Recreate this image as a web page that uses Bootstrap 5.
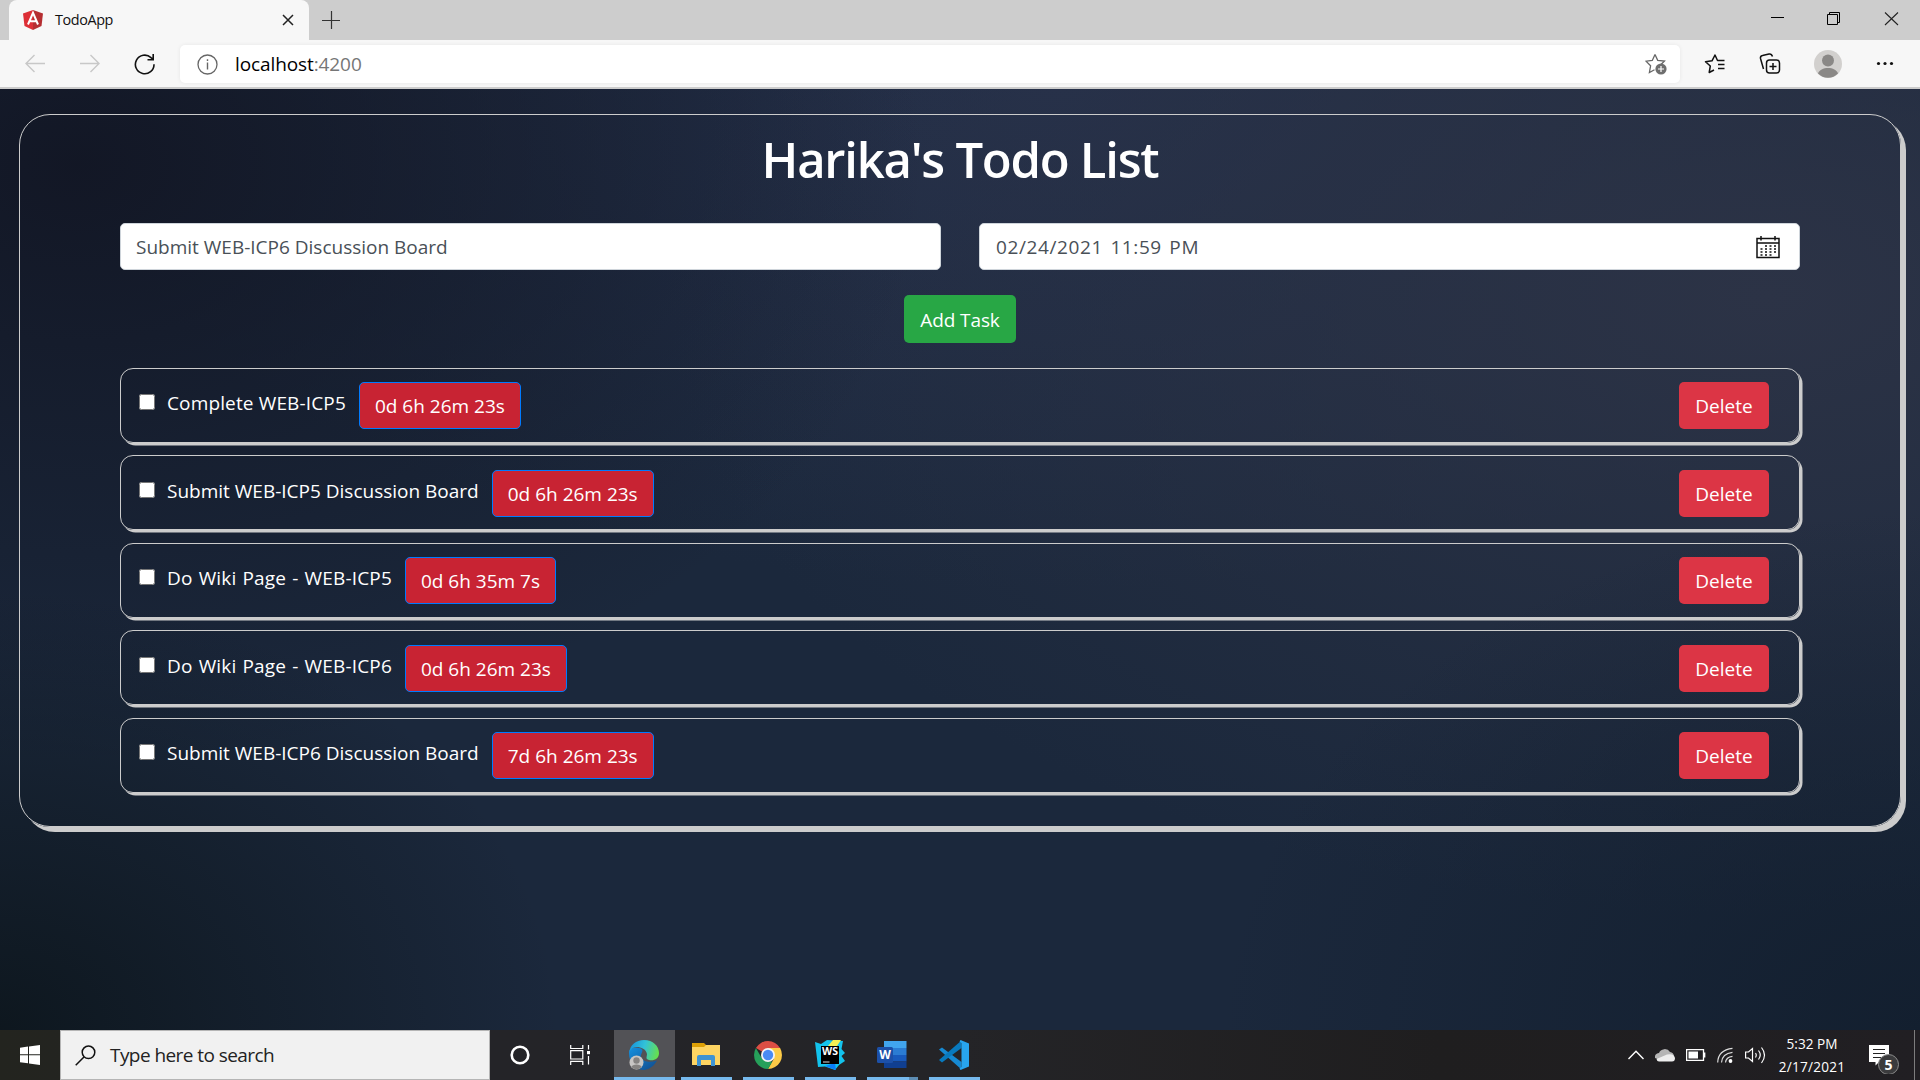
<!DOCTYPE html>
<html lang="en">
<head>
<meta charset="utf-8">
<meta name="viewport" content="width=device-width, initial-scale=1">
<title>TodoApp</title>
<link rel="stylesheet" href="https://cdn.jsdelivr.net/npm/bootstrap@5.3.0/dist/css/bootstrap.min.css">
<style>
  html, body { height: 1080px; overflow: hidden; }
  body { font-family: "Open Sans", "Noto Sans", sans-serif; font-size: 19px; line-height: 30px; color: #fff; }
  svg { display: block; flex: none; }
  /* browser chrome */
  .tab-strip { height: 40px; background: #cdcdcd; padding: 0 12px 0 9px; color: #000; }
  .tab-active { width: 300px; height: 40px; background: #f7f7f7; border-radius: 8px 8px 0 0; padding: 0 15px 0 14px; }
  .tab-title { font-size: 14.4px; letter-spacing: -.4px; line-height: 20px; color: #111; margin-left: 12px; }
  .new-tab { margin-left: 13px; }
  .window-controls { margin-bottom: 2px; }
  .address-row { height: 49px; background: #f7f7f7; border-bottom: 2px solid #ccc; padding: 5px 0 4px 24px; color: #000; }
  .address-box { width: 1500px; height: 38px; background: #fff; border-radius: 5px; margin-left: 22px; padding: 0 13px 0 17px; box-shadow: 0 0 4px rgba(0,0,0,.07); }
  .address-text { font-size: 19px; line-height: 28px; letter-spacing: -.1px; margin-left: 17px; }
  .address-text span { color: #767676; }
  /* page */
  .todo-page {
    height: 941px; padding: 25px 19px 0;
    background:
      radial-gradient(ellipse 560px 440px at 0% 100%, rgba(13,22,29,.95), rgba(13,22,29,0)),
      radial-gradient(ellipse 850px 600px at 4% 8%, rgba(18,22,36,.95), rgba(18,22,36,0)),
      radial-gradient(ellipse 700px 520px at 100% 100%, rgba(17,29,44,.8), rgba(17,29,44,0)),
      radial-gradient(ellipse 1100px 620px at 92% 22%, #2c3346, rgba(44,51,70,0)),
      radial-gradient(ellipse 1000px 500px at 55% 0%, #25304a, rgba(37,48,74,0)),
      #1b283c;
  }
  .todo-panel { width: 1882px; height: 713px; border: 1px solid #ccc; border-radius: 31px; box-shadow: 5px 5px 0 #ccc; padding: 14px 100px 0; }
  .todo-title { font-size: 49px; line-height: 60px; font-weight: 600; letter-spacing: -1.25px; margin: 0 0 34px; }
  .todo-fields { --bs-gutter-x: 38px; }
  .todo-field { height: 47px; border: 1px solid #ced4da; border-radius: 5px; background: #fff; color: #495057; padding: 1px 15px 0; line-height: 45px; }
  .todo-date { letter-spacing: .6px; word-spacing: 2px; margin-left: 1px; }
  .todo-btn { height: 47px; border-radius: 5px; padding: 2px 15px 0; font-size: 19px; line-height: 43px; color: #fff; border: 1px solid transparent; white-space: nowrap; }
  .add-btn { width: 112px; height: 48px; background: #28a745; margin: 25px auto; letter-spacing: -.1px; }
  .todo-list { gap: 12.4px; }
  .todo-item { height: 75px; border: 1px solid #ccc; border-radius: 13px; box-shadow: 2.5px 2.5px 0 #ccc; padding: 0 30px 0 18px; }
  .todo-item:nth-child(even) { padding-top: 1.4px; }
  .todo-check { width: 16px; height: 16px; margin: -7px 12px 0 0; }
  .todo-name { margin: -5px 13px 0 0; }
  .name-short { letter-spacing: .14px; }
  .name-wiki { letter-spacing: .16px; word-spacing: 1px; }
  .time-btn { background: #c82333; border-color: #007bff; }
  .delete-btn { width: 90px; background: #dc3545; }
  /* taskbar */
  .task-bar { height: 50px; background: linear-gradient(90deg, #23241f, #242428 25%, #242427 50%, #1f1e1f 75%, #211f23); }
  .start-btn { width: 60px; }
  .search-box { width: 430px; height: 50px; background: #f1f1f1; border: 1px solid #b5b5b5; color: #222; padding-left: 14px; }
  .search-text { letter-spacing: -.56px; margin-left: 14px; }
  .cortana-btn { margin-left: 20px; }
  .task-view { margin: 0 24px 0 40px; }
  .task-app { width: 51px; height: 50px; border-bottom: 3px solid #76b9ed; margin-right: 11px; padding: 3px 1px 0 0; }
  .task-app.current { width: 61px; background: #525256; margin-right: 6px; padding-right: 2px; }
  .task-app.grouped { border-image: linear-gradient(90deg, #76b9ed 78%, #5d8db3 78%) 3; }
  .tray-icons { gap: 11px; }
  .task-clock { width: 92px; font-size: 13.6px; line-height: 23px; }
  .clock-date { letter-spacing: .25px; }
  .notice-icon { margin-left: 11px; }
  .show-desktop { width: 6px; height: 50px; border-left: 1px solid #7d7d7d; margin-left: 14px; }
  .svg-label { font-family: "Open Sans", sans-serif; font-weight: 700; }
</style>
</head>
<body class="d-flex flex-column">
<header>
  <div class="tab-strip d-flex align-items-center">
    <div class="tab-active d-flex align-items-center">
      <svg width="20" height="20" viewBox="0 0 20 20"><path d="M10 0L0 3.400 1.500 16 10 20z" fill="#dd2f36"/><path d="M10 0L20 3.400 18.500 16 10 20z" fill="#b52e31"/><path d="M5 14.500L10 2.800 15 14.500M7 11.200H13" fill="none" stroke="#fff" stroke-width="2"/></svg>
      <span class="tab-title">TodoApp</span>
      <svg class="ms-auto" width="12" height="12" viewBox="0 0 12 12"><path d="M1 1L11 11M11 1L1 11" stroke="#222" stroke-width="1.500"/></svg>
    </div>
    <svg class="new-tab" width="18" height="18" viewBox="0 0 18 18"><path d="M9.500 0V18M0 9.500H18" stroke="#333" stroke-width="1.200"/></svg>
    <svg class="window-controls ms-auto" width="141" height="14" viewBox="0 0 141 14"><path d="M4 5.500H17" stroke="#000"/><path d="M60.500 2.500H70.500V12.500H60.500zM62.500 2.500V.5H72.500V10.500H70.500" fill="none" stroke="#000"/><path d="M118 .5L131 13M131 .5L118 13" stroke="#222" stroke-width="1.100"/></svg>
  </div>
  <div class="address-row d-flex align-items-center">
    <svg width="134" height="22" viewBox="0 0 134 22"><path d="M21 10.500H2M10.500 2L2 10.500 10.500 19M56 10.500H75M66.500 2L75 10.500 66.500 19" fill="none" stroke="#c8c8c8" stroke-width="1.400"/><path d="M130 11.200A9.300 9.300 0 1 1 127 4.600L129 6.300M129.200 1V6.800H123.500" fill="none" stroke="#111" stroke-width="1.600"/></svg>
    <div class="address-box d-flex align-items-center">
      <svg width="21" height="21" viewBox="0 0 21 21"><circle cx="10.500" cy="10.500" r="9.500" fill="none" stroke="#666" stroke-width="1.300"/><path d="M10.500 8.500V15.500M10.500 5.300V7" stroke="#666" stroke-width="1.400"/></svg>
      <span class="address-text">localhost<span>:4200</span></span>
      <svg class="ms-auto" width="22" height="22" viewBox="0 0 22 22"><path d="M10 1.500L12.700 7.300 19.500 8 16 11.500M10 1.500L7.300 7.500 1 8.200 5.600 12.800 4.400 19.500 9.500 16.800" fill="none" stroke="#666" stroke-width="1.300"/><circle cx="16" cy="16" r="5.600" fill="#6e6e6e"/><path d="M16 13V19M13 16H19" stroke="#fff" stroke-width="1.200"/></svg>
    </div>
    <svg width="215" height="30" viewBox="1680 0 215 30"><g fill="none" stroke="#111" stroke-width="1.500" stroke-linejoin="round"><path d="M1720 11.500H1717.500L1715 6 1712 11.800 1705.500 12.700 1710.300 17 1709.200 23.500 1714 21M1717.500 11.500H1724.500M1718 15.500H1724.500M1718 19.500H1724.500"/><rect x="1766.500" y="11" width="13" height="13" rx="3"/><path d="M1773 14V21M1769.500 17.500H1776.500M1763.500 20L1760.500 9.500Q1760 7 1762.500 6.500L1769 5Q1771.500 4.500 1772.500 7.500"/></g><circle cx="1828" cy="15" r="14" fill="#d2d0ce"/><circle cx="1828" cy="11.500" r="6" fill="#8a8886"/><path d="M1818 24.500C1820 17 1836 17 1838 24.500A14 14 0 0 1 1818 24.500" fill="#8a8886"/><g fill="#111"><circle cx="1878.500" cy="14.500" r="1.600"/><circle cx="1885" cy="14.500" r="1.600"/><circle cx="1891.500" cy="14.500" r="1.600"/></g></svg>
  </div>
</header>
<main class="todo-page">
  <section class="todo-panel">
    <h1 class="todo-title text-center">Harika's Todo List</h1>
    <div class="todo-fields row">
      <div class="col-6"><div class="todo-field">Submit WEB-ICP6 Discussion Board</div></div>
      <div class="col-6"><div class="todo-field d-flex align-items-center"><span class="todo-date">02/24/2021 11:59 PM</span>
        <svg class="ms-auto me-1" width="24" height="23" viewBox="0 0 24 23"><path d="M1 2.500H23V21.500H1zM1 7H23M5 0V4.500M19 0V4.500" fill="none" stroke="#111" stroke-width="1.500"/><path d="M9 10H20M4.500 13H20M4.500 16H20M4.500 19H16" stroke="#111" stroke-width="1.500" stroke-dasharray="2 2.500"/></svg></div></div>
    </div>
    <button class="btn todo-btn add-btn d-block">Add Task</button>
    <div class="todo-list d-flex flex-column">
      <div class="todo-item d-flex align-items-center"><input class="todo-check" type="checkbox"><span class="todo-name name-short">Complete WEB-ICP5</span><button class="btn todo-btn time-btn">0d 6h 26m 23s</button><button class="btn todo-btn delete-btn ms-auto">Delete</button></div>
      <div class="todo-item d-flex align-items-center"><input class="todo-check" type="checkbox"><span class="todo-name">Submit WEB-ICP5 Discussion Board</span><button class="btn todo-btn time-btn">0d 6h 26m 23s</button><button class="btn todo-btn delete-btn ms-auto">Delete</button></div>
      <div class="todo-item d-flex align-items-center"><input class="todo-check" type="checkbox"><span class="todo-name name-wiki">Do Wiki Page - WEB-ICP5</span><button class="btn todo-btn time-btn">0d 6h 35m 7s</button><button class="btn todo-btn delete-btn ms-auto">Delete</button></div>
      <div class="todo-item d-flex align-items-center"><input class="todo-check" type="checkbox"><span class="todo-name name-wiki">Do Wiki Page - WEB-ICP6</span><button class="btn todo-btn time-btn">0d 6h 26m 23s</button><button class="btn todo-btn delete-btn ms-auto">Delete</button></div>
      <div class="todo-item d-flex align-items-center"><input class="todo-check" type="checkbox"><span class="todo-name">Submit WEB-ICP6 Discussion Board</span><button class="btn todo-btn time-btn">7d 6h 26m 23s</button><button class="btn todo-btn delete-btn ms-auto">Delete</button></div>
    </div>
  </section>
</main>
<footer class="task-bar d-flex align-items-center">
  <div class="start-btn d-flex justify-content-center"><svg width="20" height="20" viewBox="0 0 20 20" fill="#fff"><path d="M0 2.700L8 1.600V9.300H0zM9 1.500L20 0V9.300H9zM0 10.300H8V18.200L0 17.200zM9 10.300H20V20L9 18.400z"/></svg></div>
  <div class="search-box d-flex align-items-center">
    <svg width="21" height="21" viewBox="0 0 21 21"><circle cx="13.500" cy="7.300" r="6.300" fill="none" stroke="#111" stroke-width="1.500"/><path d="M9 12L.7 20.300" stroke="#111" stroke-width="1.500"/></svg>
    <span class="search-text">Type here to search</span>
  </div>
  <svg class="cortana-btn" width="20" height="20" viewBox="0 0 20 20"><circle cx="10" cy="10" r="8.300" fill="none" stroke="#fff" stroke-width="2.600"/></svg>
  <svg class="task-view" width="20" height="20" viewBox="0 0 20 20"><path d="M.7 0V3.500H12.800V0M.7 5.700H12.800V14H.7zM.7 20V16.300H12.800V20M18.500 0V4.500M18.500 11V19.500" fill="none" stroke="#fff" stroke-width="1.200"/><path d="M17 6H20V9.200H17z" fill="#fff"/></svg>
  <div class="task-app current d-flex align-items-center justify-content-center">
    <svg width="30" height="30" viewBox="0 0 30 30">
      <defs>
        <linearGradient id="edgeTop" x1="0" y1=".3" x2="1" y2=".5"><stop offset="0" stop-color="#1693dc"/><stop offset=".5" stop-color="#32c2d8"/><stop offset="1" stop-color="#66e04e"/></linearGradient>
        <linearGradient id="edgeBase" x1="0" y1="0" x2="1" y2="1"><stop offset="0" stop-color="#1490df"/><stop offset="1" stop-color="#114a8b"/></linearGradient>
      </defs>
      <path d="M0 13C0 8 5 7 10 8 17 9 11 14 12 17 14 22 21 23 28 20.500 24 28 18 30 14 30 6 29 0 23 0 13z" fill="url(#edgeBase)"/>
      <path d="M0 13C1 5 7 0 15 0 24 0 30 6 30 13 30 19 25 21 20 20 16 19 18 17 18 14 17 9 12 7 8 7 4 7 1 10 0 13z" fill="url(#edgeTop)"/>
      <circle cx="7.500" cy="22.500" r="7" fill="#c8c6c4"/><circle cx="7.500" cy="20.500" r="3.200" fill="#858381"/><path d="M2.300 27C3 23.500 12 23.500 12.700 27A7 7 0 0 1 2.300 27" fill="#858381"/>
    </svg>
  </div>
  <div class="task-app d-flex align-items-center justify-content-center">
    <svg width="28" height="24" viewBox="0 0 28 24"><path d="M0 0H12L14 2V7H0z" fill="#dda006"/><path d="M0 4H12L14 2H28V22H0z" fill="#fdd462"/><path d="M5 14Q5 12 7 12H21Q23 12 23 14V23H19V17H9V23H5z" fill="#3e93d2"/></svg>
  </div>
  <div class="task-app d-flex align-items-center justify-content-center">
    <svg width="28" height="28" viewBox="0 0 28 28"><path d="M14 14L1.900 7A14 14 0 0 1 26.100 7z" fill="#dc4f44"/><path d="M14 7H26.100A14 14 0 0 1 14 28L20 17.500z" fill="#fdcb47"/><path d="M1.900 7L8 17.500 14 20.500H18.300L14 28A14 14 0 0 1 1.900 7z" fill="#26a05a"/><circle cx="14" cy="14" r="7" fill="#f4f4f4"/><circle cx="14" cy="14" r="5.200" fill="#4a8af4"/></svg>
  </div>
  <div class="task-app d-flex align-items-center justify-content-center">
    <svg width="30" height="30" viewBox="0 0 30 30"><path d="M0 2L6 4 12 0 28 1 26.500 9 30 13 26.500 16 30 21 24 25 20 30 10 26.500 3 27z" fill="#13c3ed"/><path d="M10 26L20 23 21 30z" fill="#087cfa"/><path d="M18 0H26L22 6H13z" fill="#f4f153"/><path d="M6 6H24V24H6z" fill="#000"/><text x="15" y="15" fill="#fff" font-size="10.500" text-anchor="middle" class="svg-label">WS</text><path d="M8 21.500H14.500V22.500H8z" fill="#ddd"/></svg>
  </div>
  <div class="task-app grouped d-flex align-items-center justify-content-center">
    <svg width="30" height="28" viewBox="0 0 30 28"><path d="M7 0H29.500V7H7z" fill="#41a5ee"/><path d="M7 7H29.500V14H7z" fill="#2b7cd3"/><path d="M7 14H29.500V20.500H7z" fill="#185abd"/><path d="M7 20.500H29.500V27H7z" fill="#103f91"/><rect x="0" y="6" width="16" height="16" rx="1.500" fill="#1c50a8"/><text x="8" y="18" fill="#fff" font-size="12" text-anchor="middle" class="svg-label">W</text></svg>
  </div>
  <div class="task-app d-flex align-items-center justify-content-center">
    <svg width="30" height="30" viewBox="0 0 30 30"><path d="M0 9.500L3 7.500 22.500 22V29.500z" fill="#1689d2"/><path d="M0 20L3 22.500 22.500 8V.5z" fill="#0879bd"/><path d="M21.500 0L30 3.500V26.500L21.500 30 20.500 28.500 22.500 27V3L20.500 1.500z" fill="#28a5ee"/></svg>
  </div>
  <div class="tray-icons d-flex align-items-center ms-auto">
    <svg width="16" height="10" viewBox="0 0 16 10"><path d="M.5 9L8 1.300 15.500 9" fill="none" stroke="#fff" stroke-width="1.400"/></svg>
    <svg width="20" height="14" viewBox="0 0 20 14"><path d="M0 10A4 4 0 0 1 4 5 6 5.500 0 0 1 15 4Q18.500 4.500 19 8L5 12z" fill="#b5b5b5"/><path d="M1.500 11L12 6.500Q19 5 20 10 20 13.500 17 13.500H4Q2 13.500 1.500 11" fill="#eee"/></svg>
    <svg width="20" height="12" viewBox="0 0 20 12"><path d="M.6.6H17.500V11.400H.6zM18.700 3.500V8.500" fill="none" stroke="#fff" stroke-width="1.300"/><path d="M2.500 2.500H12V9.500H2.500z" fill="#fff"/></svg>
    <svg width="17" height="17" viewBox="0 0 17 17"><g fill="none" stroke="#ddd" stroke-width="1.200"><path d="M.7 15.500Q1 3 15.500 1.300M4.500 15.500Q5 6.500 15.500 5.300M8.500 15.500Q9 10 15.500 9.300"/></g><circle cx="13.500" cy="14" r="1.900" fill="#fff"/></svg>
    <svg width="21" height="18" viewBox="0 0 21 18"><path d="M.6 6H3.500L7.500 2.500V15.500L3.500 12H.6zM10.500 7Q12 9 10.500 11.500M13.500 4.500Q17 9 13.500 13.500M16.500 1.500Q22.500 9 16.500 17" fill="none" stroke="#fff" stroke-width="1.200"/></svg>
  </div>
  <div class="task-clock text-center">5:32 PM<br><span class="clock-date">2/17/2021</span></div>
  <svg class="notice-icon" width="31" height="38" viewBox="0 -1 31 38"><path d="M0 8H20V25H10L6.500 28.500V25H0z" fill="#fff"/><path d="M4 12.500H16M4 16.500H16M4 20.500H12" stroke="#222" stroke-width="1.200"/><circle cx="19.500" cy="27.500" r="10" fill="#3b3b3d" stroke="#8d8d8d"/><text x="19.500" y="32.500" fill="#fff" font-size="14" text-anchor="middle" class="svg-label">5</text></svg>
  <div class="show-desktop"></div>
</footer>
<script src="https://cdn.jsdelivr.net/npm/bootstrap@5.3.0/dist/js/bootstrap.bundle.min.js"></script>
</body>
</html>
